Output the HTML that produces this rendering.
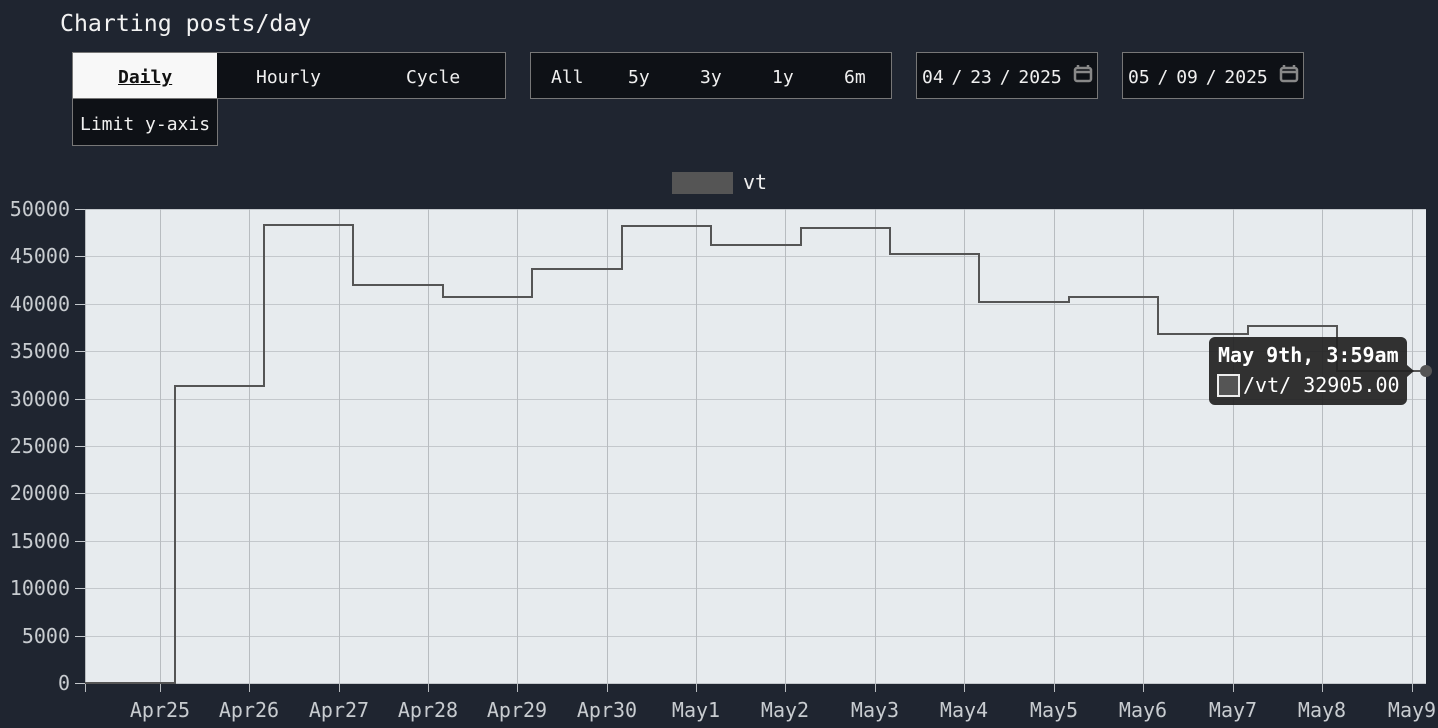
<!DOCTYPE html>
<html><head><style>
body{margin:0;width:1438px;height:728px;background:#1f2530;overflow:hidden;font-family:"DejaVu Sans Mono","Liberation Mono",monospace;color:#eee;position:relative}
.a{position:absolute}
.box{position:absolute;border:1px solid #777;background:#0e1116;box-sizing:border-box}
.t{position:absolute;font-size:18px;color:#f0f0f0;line-height:20px}
.d span{margin:0 -3px}
</style></head><body>
<div class="a" style="left:60px;top:10px;font-size:23.2px;color:#f2f2f2">Charting posts/day</div>
<div class="box" style="left:72px;top:52px;width:434px;height:47px"></div>
<div class="a" style="left:73px;top:53px;width:144px;height:45px;background:#f8f8f8"></div>
<div class="t" style="left:118px;top:68px;color:#111;font-weight:bold;text-decoration:underline">Daily</div>
<div class="t" style="left:256px;top:68px">Hourly</div>
<div class="t" style="left:406px;top:68px">Cycle</div>
<div class="box" style="left:72px;top:98px;width:146px;height:48px"></div>
<div class="t" style="left:80px;top:115px">Limit y-axis</div>
<div class="box" style="left:530px;top:52px;width:362px;height:47px"></div>
<div class="t" style="left:551px;top:68px">All</div>
<div class="t" style="left:628px;top:68px">5y</div>
<div class="t" style="left:700px;top:68px">3y</div>
<div class="t" style="left:772px;top:68px">1y</div>
<div class="t" style="left:844px;top:68px">6m</div>
<div class="box" style="left:916px;top:52px;width:182px;height:47px"></div>
<div class="t d" style="left:922px;top:68px">04 <span>/</span> 23 <span>/</span> 2025</div>
<div class="box" style="left:1122px;top:52px;width:182px;height:47px"></div>
<div class="t d" style="left:1128px;top:68px">05 <span>/</span> 09 <span>/</span> 2025</div>
<svg class="a" style="left:0;top:0" width="1438" height="728">
<g fill="none" stroke="#888" stroke-width="2.5">
<rect x="1075" y="68" width="16" height="13" rx="2"/><line x1="1075" y1="72" x2="1091" y2="72"/><line x1="1078" y1="65" x2="1078" y2="68"/><line x1="1088" y1="65" x2="1088" y2="68"/>
<rect x="1281" y="68" width="16" height="13" rx="2"/><line x1="1281" y1="72" x2="1297" y2="72"/><line x1="1284" y1="65" x2="1284" y2="68"/><line x1="1294" y1="65" x2="1294" y2="68"/>
</g>
<rect x="672" y="172" width="61" height="22" fill="#555"/>
<text x="743" y="189" fill="#eee" font-size="20" font-family="DejaVu Sans Mono,monospace">vt</text>
<rect x="85" y="209" width="1341" height="474" fill="#e7ebee"/>
<g stroke="#c4c8cc" stroke-width="1">
<line x1="75" x2="1426" y1="209.5" y2="209.5"/><line x1="75" x2="1426" y1="256.5" y2="256.5"/><line x1="75" x2="1426" y1="304.5" y2="304.5"/><line x1="75" x2="1426" y1="351.5" y2="351.5"/><line x1="75" x2="1426" y1="399.5" y2="399.5"/><line x1="75" x2="1426" y1="446.5" y2="446.5"/><line x1="75" x2="1426" y1="493.5" y2="493.5"/><line x1="75" x2="1426" y1="541.5" y2="541.5"/><line x1="75" x2="1426" y1="588.5" y2="588.5"/><line x1="75" x2="1426" y1="636.5" y2="636.5"/><line x1="75" x2="1426" y1="683.5" y2="683.5"/>
</g>
<g stroke="#b8bcc0" stroke-width="1">
<line x1="85.5" x2="85.5" y1="209" y2="692"/>
<line x1="160.5" x2="160.5" y1="209" y2="692"/><line x1="249.5" x2="249.5" y1="209" y2="692"/><line x1="339.5" x2="339.5" y1="209" y2="692"/><line x1="428.5" x2="428.5" y1="209" y2="692"/><line x1="517.5" x2="517.5" y1="209" y2="692"/><line x1="607.5" x2="607.5" y1="209" y2="692"/><line x1="696.5" x2="696.5" y1="209" y2="692"/><line x1="785.5" x2="785.5" y1="209" y2="692"/><line x1="875.5" x2="875.5" y1="209" y2="692"/><line x1="964.5" x2="964.5" y1="209" y2="692"/><line x1="1054.5" x2="1054.5" y1="209" y2="692"/><line x1="1143.5" x2="1143.5" y1="209" y2="692"/><line x1="1233.5" x2="1233.5" y1="209" y2="692"/><line x1="1322.5" x2="1322.5" y1="209" y2="692"/><line x1="1412.5" x2="1412.5" y1="209" y2="692"/>
</g>
<path fill="none" stroke="#555" stroke-width="2" d="M85 683H175V386H264V225H353V285H443V297H532V269H622V226H711V245H801V228H890V254H979V302H1069V297H1158V334H1248V326H1337V371H1426"/>
<circle cx="1426" cy="371" r="6" fill="#555"/>
<g fill="#c8ccd0" font-size="20" font-family="DejaVu Sans Mono,monospace" text-anchor="end">
<text x="70" y="216">50000</text><text x="70" y="263">45000</text><text x="70" y="311">40000</text><text x="70" y="358">35000</text><text x="70" y="406">30000</text><text x="70" y="453">25000</text><text x="70" y="500">20000</text><text x="70" y="548">15000</text><text x="70" y="595">10000</text><text x="70" y="643">5000</text><text x="70" y="690">0</text>
</g>
<g fill="#c8ccd0" font-size="20" font-family="DejaVu Sans Mono,monospace" text-anchor="middle">
<text x="160" y="717">Apr25</text><text x="249" y="717">Apr26</text><text x="339" y="717">Apr27</text><text x="428" y="717">Apr28</text><text x="517" y="717">Apr29</text><text x="607" y="717">Apr30</text><text x="696" y="717">May1</text><text x="785" y="717">May2</text><text x="875" y="717">May3</text><text x="964" y="717">May4</text><text x="1054" y="717">May5</text><text x="1143" y="717">May6</text><text x="1233" y="717">May7</text><text x="1322" y="717">May8</text><text x="1412" y="717">May9</text>
</g>
<path d="M1215 337H1401a6 6 0 0 1 6 6V365L1414 371L1407 377V399a6 6 0 0 1-6 6H1215a6 6 0 0 1-6-6V343a6 6 0 0 1 6-6Z" fill="#222" fill-opacity="0.93"/>
<text x="1218" y="362" fill="#fff" font-size="20" font-weight="bold" font-family="DejaVu Sans Mono,monospace">May 9th, 3:59am</text>
<rect x="1218" y="375" width="21" height="21" fill="#555" stroke="#eee" stroke-width="2"/>
<text x="1243" y="392" fill="#fff" font-size="20" font-family="DejaVu Sans Mono,monospace">/vt/ 32905.00</text>
</svg>
</body></html>
